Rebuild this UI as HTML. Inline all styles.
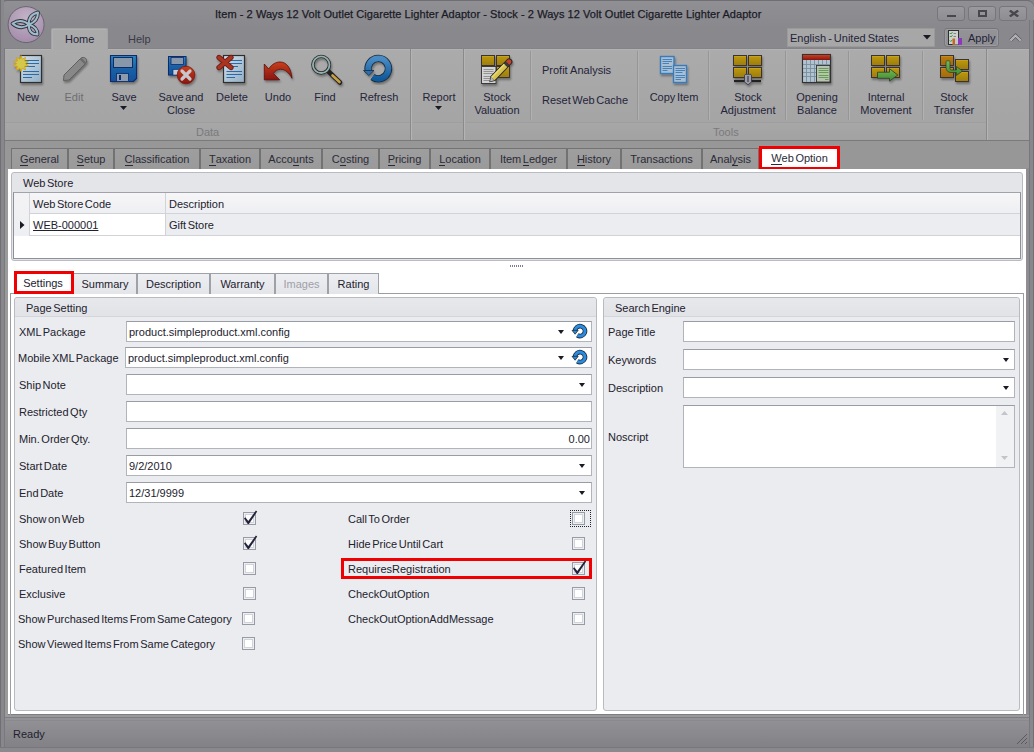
<!DOCTYPE html>
<html><head><meta charset="utf-8">
<style>
*{box-sizing:border-box;margin:0;padding:0}
html,body{width:1034px;height:752px;overflow:hidden;background:#858589}
body{position:relative;font-family:"Liberation Sans",sans-serif;font-size:11px;color:#23232e;word-spacing:-1.5px}
.a{position:absolute}
.t{position:absolute;white-space:nowrap;line-height:13px;font-size:11px;padding-top:1px}
.c{text-align:center}
#frame{left:0;top:0;width:1034px;height:752px;border-radius:7px 7px 0 0;background:#89898d;border:1px solid #6c6c70}
#title{left:0;top:0;width:1034px;height:28px;background:linear-gradient(#909094,#89898d)}
.wb{position:absolute;top:6px;width:28px;height:15px;border:1px solid #77777b;border-radius:3px;background:linear-gradient(#9a9a9e,#8e8e92)}
#rib{left:4px;top:48px;width:1026px;height:93px;background:linear-gradient(#ababab,#a6a6a6 60%,#a4a4a4);border-top:1px solid #848488;border-bottom:1px solid #7a7a7a;box-shadow:inset 0 1px 0 #b2b2b2}
.sep{position:absolute;top:51px;width:2px;height:69px;border-left:1px solid #969696;border-right:1px solid #b2b2b2}
.gsep{position:absolute;top:49px;width:2px;height:91px;border-left:1px solid #8a8a8a;border-right:1px solid #b4b4b4}
.cap{position:absolute;top:122px;height:18px;border-top:1px solid #9e9e9e;background:linear-gradient(#a7a7a7,#a2a2a2)}
.rl{color:#24243a}
.dis{color:#6e6e72}
.gl{color:#7a7a7e}
</style></head><body>
<div id="frame" class="a"></div>
<div id="title" class="a" style="border-radius:7px 7px 0 0;border-top:1px solid #6f6f73"></div>
<!-- logo -->
<svg class="a" style="left:6px;top:5px" width="40" height="40" viewBox="6 5 40 40">
<defs><radialGradient id="lg" cx="50%" cy="30%" r="70%"><stop offset="0" stop-color="#c2b2c6"/><stop offset="0.6" stop-color="#b09cb6"/><stop offset="1" stop-color="#a48cac"/></radialGradient></defs>
<circle cx="26.1" cy="24.6" r="18" fill="url(#lg)" stroke="#6a6470" stroke-width="1"/>
<g fill="none" stroke="#2e3238" stroke-width="3.8" stroke-linejoin="round">
<path d="M29 24.5Q21 18 12.5 23.5Q20.5 30.5 29 24.5Z"/><path d="M29 24.5Q38 21.5 38 12.5Q28 15 29 24.5Z"/><path d="M29 24.5Q37.8 27.5 37.5 34.5Q28 34 29 24.5Z"/></g>
<g fill="none" stroke="#9ebccc" stroke-width="2" stroke-linejoin="round">
<path d="M29 24.5Q21 18 12.5 23.5Q20.5 30.5 29 24.5Z"/><path d="M29 24.5Q38 21.5 38 12.5Q28 15 29 24.5Z"/><path d="M29 24.5Q37.8 27.5 37.5 34.5Q28 34 29 24.5Z"/></g>
</svg>
<div class="t" style="left:215px;top:7px;color:#1a1a26;letter-spacing:0.06px;word-spacing:0;-webkit-text-stroke:0.25px #1a1a26">Item - 2 Ways 12 Volt Outlet Cigarette Lighter Adaptor - Stock - 2 Ways 12 Volt Outlet Cigarette Lighter Adaptor</div>
<div class="wb" style="left:937px"><div class="a" style="left:9px;top:8px;width:9px;height:2px;background:#48484c"></div></div>
<div class="wb" style="left:968px"><div class="a" style="left:9px;top:3px;width:9px;height:7px;border:2px solid #48484c"></div></div>
<div class="wb" style="left:999px"><svg class="a" style="left:9px;top:3px" width="10" height="7"><path d="M0.8 0.5L9.2 6.5M9.2 0.5L0.8 6.5" stroke="#48484c" stroke-width="2.4"/></svg></div>

<!-- ribbon tabs -->


<div class="t" style="left:128px;top:32px;color:#3a3a48">Help</div>
<div class="a" style="left:787px;top:28px;width:148px;height:19px;background:#a7a7a7;border:1px solid #9a9a9a"></div>
<div class="t rl" style="left:790px;top:31px;word-spacing:-1px">English - United States</div>
<svg class="a" style="left:923px;top:35px" width="8" height="5"><path d="M0 0H8L4 4.5Z" fill="#1a1a26"/></svg>
<div class="a" style="left:944px;top:28px;width:55px;height:19px;background:linear-gradient(#949498,#8e8e92);border:1px solid #77777b;border-radius:3px;box-shadow:inset 0 0 0 1px #9c9ca0"></div>
<svg class="a" style="left:948px;top:30px" width="15" height="16" viewBox="948 30 15 16"><rect x="948.5" y="30.5" width="10" height="14" fill="#cfcfcf" stroke="#2e2e2e"/><path d="M949.8 33L950.8 34L952.5 32.2M949.8 36L950.8 37L952.5 35.2M949.8 40.5L950.8 41.5L952.5 39.7" stroke="#1e9a2a" stroke-width="1" fill="none"/><path d="M953.5 33.5H956M953.5 36.5H956" stroke="#7a7a7a" stroke-width="0.9"/><path d="M952.5 38.5H955V45H952.5Z" fill="#c8661e"/><path d="M955 38.5H958V44.5H955Z" fill="#c4c8cc"/><path d="M958 38H962V44.8H958Z" fill="#8a3ab8"/></svg>
<div class="t rl" style="left:968px;top:31px">Apply</div>
<svg class="a" style="left:1009px;top:33px" width="13" height="9"><path d="M1.5 7.5L6.5 2.5L11.5 7.5" stroke="#5e5e62" stroke-width="3.4" fill="none"/><path d="M1.5 7.5L6.5 2.5L11.5 7.5" stroke="#c4c4c6" stroke-width="1.8" fill="none"/><path d="M1.5 7.5L6.5 2.5L11.5 7.5" stroke="#9a9a9e" stroke-width="0.6" fill="none"/></svg>

<!-- ribbon body -->
<div id="rib" class="a"></div>
<div class="a" style="left:51px;top:28px;width:57px;height:22px;background:linear-gradient(#aaaaaa,#a9a9a9);border:1px solid #a4a4a6;border-bottom:none;border-radius:2px 2px 0 0;box-shadow:inset 1px 1px 0 #b0b0b0"></div>
<div class="t rl" style="left:65px;top:32px">Home</div>
<div class="cap" style="left:5px;width:406px"></div>
<div class="cap" style="left:413px;width:51px"></div>
<div class="cap" style="left:466px;width:521px"></div>
<div class="gsep" style="left:410px"></div>
<div class="gsep" style="left:463px"></div>
<div class="gsep" style="left:986px"></div>
<div class="sep" style="left:530px"></div>
<div class="sep" style="left:637px"></div>
<div class="sep" style="left:708px"></div>
<div class="sep" style="left:785px"></div>
<div class="sep" style="left:848px"></div>
<div class="sep" style="left:922px"></div>
<div class="t gl" style="left:196px;top:125px">Data</div>
<div class="t gl" style="left:713px;top:125px">Tools</div>

<!-- ribbon labels -->
<div class="t rl c" style="left:8px;width:40px;top:90px">New</div>
<div class="t dis c" style="left:54px;width:40px;top:90px">Edit</div>
<div class="t rl c" style="left:104px;width:40px;top:90px">Save</div>
<svg class="a" style="left:120px;top:106px" width="7" height="4"><path d="M0 0H7L3.5 4Z" fill="#1a1a26"/></svg>
<div class="t rl c" style="left:151px;width:60px;top:90px">Save and<br>Close</div>
<div class="t rl c" style="left:207px;width:50px;top:90px">Delete</div>
<div class="t rl c" style="left:253px;width:50px;top:90px">Undo</div>
<div class="t rl c" style="left:300px;width:50px;top:90px">Find</div>
<div class="t rl c" style="left:349px;width:60px;top:90px">Refresh</div>
<div class="t rl c" style="left:414px;width:50px;top:90px">Report</div>
<svg class="a" style="left:435px;top:106px" width="7" height="4"><path d="M0 0H7L3.5 4Z" fill="#1a1a26"/></svg>
<div class="t rl c" style="left:467px;width:60px;top:90px">Stock<br>Valuation</div>
<div class="t rl" style="left:542px;top:63px;word-spacing:0">Profit Analysis</div>
<div class="t rl" style="left:542px;top:93px">Reset Web Cache</div>
<div class="t rl c" style="left:644px;width:60px;top:90px">Copy Item</div>
<div class="t rl c" style="left:713px;width:70px;top:90px">Stock<br>Adjustment</div>
<div class="t rl c" style="left:787px;width:60px;top:90px">Opening<br>Balance</div>
<div class="t rl c" style="left:851px;width:70px;top:90px">Internal<br>Movement</div>
<div class="t rl c" style="left:924px;width:60px;top:90px">Stock<br>Transfer</div>

<svg class="a" style="left:0;top:0" width="1034" height="140" viewBox="0 0 1034 140">
<defs>
<linearGradient id="docg" x1="0" y1="0" x2="1" y2="1"><stop offset="0" stop-color="#d2dee8"/><stop offset="1" stop-color="#93b0c6"/></linearGradient>
<linearGradient id="gold" x1="0" y1="0" x2="0" y2="1"><stop offset="0" stop-color="#d4b030"/><stop offset="0.2" stop-color="#b8940e"/><stop offset="1" stop-color="#9c7c0c"/></linearGradient>
<linearGradient id="orng" x1="0" y1="0" x2="0" y2="1"><stop offset="0" stop-color="#d09a30"/><stop offset="0.2" stop-color="#b87a10"/><stop offset="1" stop-color="#a06a10"/></linearGradient>
<linearGradient id="redg" x1="0" y1="0" x2="0" y2="1"><stop offset="0" stop-color="#c8401c"/><stop offset="1" stop-color="#8a1410"/></linearGradient>
<linearGradient id="blug" x1="0" y1="0" x2="0" y2="1"><stop offset="0" stop-color="#4a8cc4"/><stop offset="1" stop-color="#0e5a9c"/></linearGradient>
<linearGradient id="diskg" x1="0" y1="0" x2="0" y2="1"><stop offset="0" stop-color="#2c86bc"/><stop offset="0.5" stop-color="#1a62a6"/><stop offset="1" stop-color="#12509a"/></linearGradient>
<linearGradient id="grng" x1="0" y1="0" x2="0" y2="1"><stop offset="0" stop-color="#78b858"/><stop offset="1" stop-color="#3c8a2c"/></linearGradient>
<filter id="sh" x="-20%" y="-20%" width="150%" height="150%"><feGaussianBlur in="SourceAlpha" stdDeviation="0.8"/><feOffset dx="1" dy="1.5"/><feComponentTransfer><feFuncA type="linear" slope="0.35"/></feComponentTransfer><feMerge><feMergeNode/><feMergeNode in="SourceGraphic"/></feMerge></filter>
</defs>
<!-- New -->
<g filter="url(#sh)">
<rect x="20.5" y="55.5" width="21" height="27" fill="url(#docg)" stroke="#2e2e2e" stroke-width="1.2"/>
<g stroke="#2b6aa6" stroke-width="1.1"><path d="M23 60.5H39M23 63.5H39M23 66.5H35M23 71.5H39M23 74.5H39M23 77.5H32"/></g>
<path d="M21 55.5L22.2 59.2L25.5 57.5L24.6 61L28.4 61.6L25.3 63.6L28.4 65.8L24.6 66.3L25.5 70L22.2 68.2L21 71.5L19.8 68.2L16.5 70L17.4 66.3L13.6 65.8L16.7 63.6L13.6 61.6L17.4 61L16.5 57.5L19.8 59.2Z" fill="#d4c84a" stroke="#d4a414" stroke-width="0.9"/>
</g>
<!-- Edit -->
<g filter="url(#sh)"><path d="M63.5 80.5L64 75L80.5 58.5C82 57 84.5 57 85.8 58.5C87 59.8 87 62 85.5 63.5L69 80Z" fill="#888888" stroke="#606060" stroke-width="1"/><path d="M80.5 58.5L85.5 63.5" stroke="#6a6a6a" stroke-width="2.2"/></g>
<!-- Save -->
<g filter="url(#sh)">
<path d="M110.5 55.5H136.5V78.5L133.5 81.5H110.5Z" fill="url(#diskg)" stroke="#0c2a6a" stroke-width="1.1"/>
<rect x="113.5" y="57.5" width="19" height="10" fill="#8898aa" stroke="#0c2a6a" stroke-width="1"/>
<rect x="116.5" y="73.5" width="12" height="8" fill="#8c9cae" stroke="#0c2a6a" stroke-width="0.8"/>
<rect x="119" y="75" width="2" height="5" fill="#0c2a6a"/>
</g>
<!-- Save and Close -->
<g filter="url(#sh)">
<rect x="168.5" y="56.5" width="17.5" height="18.5" fill="url(#diskg)" stroke="#0c2a6a" stroke-width="1"/>
<rect x="171" y="57.5" width="12.5" height="7" fill="#8898aa" stroke="#0c2a6a" stroke-width="0.8"/>
<rect x="173" y="69.5" width="8" height="5.5" fill="#c8ccd4" stroke="#0c2a6a" stroke-width="0.6"/>
<circle cx="186" cy="75" r="8.8" fill="url(#redg)" stroke="#7a1a10" stroke-width="0.8"/>
<path d="M182 71L190 79M190 71L182 79" stroke="#c8c8cc" stroke-width="3.2" stroke-linecap="round"/>
</g>
<!-- Delete -->
<g filter="url(#sh)">
<rect x="223.5" y="55.5" width="21" height="27" fill="url(#docg)" stroke="#2e2e2e" stroke-width="1.2"/>
<g stroke="#2b6aa6" stroke-width="1.1"><path d="M226.5 60.5H242M226.5 63.5H242M226.5 66.5H238M226.5 71.5H242M226.5 74.5H242M226.5 77.5H235"/></g>
<path d="M219 57.5L231 67.5M231 57.5L219 67.5" stroke="#6a1410" stroke-width="5.2" stroke-linecap="round"/>
<path d="M219 57.5L231 67.5M231 57.5L219 67.5" stroke="#a83420" stroke-width="3.6" stroke-linecap="round"/>
</g>
<!-- Undo -->
<g filter="url(#sh)"><path d="M264.3 64L268.6 69C272 64 276 62 280 62C286 62 291 67 292 78.3C289 72.5 285 69.2 280.5 69.2C277.5 69.2 275 71 273.4 73.5L279.7 79.8L264.3 79.8Z" fill="url(#redg)" stroke="#5a1010" stroke-width="0.8"/></g>
<!-- Find -->
<g filter="url(#sh)">
<path d="M328.5 71.5L340 82.5" stroke="#222" stroke-width="4.6" stroke-linecap="round"/>
<path d="M332.5 75.5L339.5 82" stroke="#c8a040" stroke-width="2.6" stroke-linecap="round"/>
<circle cx="321.2" cy="64.7" r="8.3" fill="none" stroke="#2a2a2a" stroke-width="3.4"/>
<circle cx="321.2" cy="64.7" r="8.3" fill="none" stroke="#92b2b2" stroke-width="1.8"/>
</g>
<!-- Refresh -->
<g filter="url(#sh)">
<path d="M368.5 71.5A10.2 10.2 0 1 1 372.5 77" fill="none" stroke="#1a2a3a" stroke-width="7.4"/>
<path d="M368.5 71.5A10.2 10.2 0 1 1 372.5 77" fill="none" stroke="url(#blug)" stroke-width="5.6"/>
<path d="M363.5 70.5H374L368.8 75.5Z" fill="#2a70b0" stroke="#1a2a3a" stroke-width="0.8"/>
</g>
<!-- Stock Valuation -->
<g filter="url(#sh)">
<rect x="481.5" y="55.5" width="13" height="10" fill="url(#gold)" stroke="#3a3030" stroke-width="1"/>
<rect x="496.5" y="55.5" width="13" height="10" fill="url(#gold)" stroke="#3a3030" stroke-width="1"/>
<rect x="496.5" y="66.5" width="13" height="11" fill="url(#gold)" stroke="#3a3030" stroke-width="1"/>
<rect x="481.5" y="66.5" width="14.5" height="17" fill="#d4d4d4" stroke="#3a3a3a" stroke-width="1"/>
<g stroke="#8a8a8a" stroke-width="0.9"><path d="M483.5 69.5H493.5M483.5 71.5H493.5M483.5 73.5H493.5M483.5 76.5H493.5M483.5 78.5H493.5M483.5 80.5H493.5"/></g>
<g transform="translate(489.3 82.2) rotate(-46)">
<path d="M0 0L5 -3.3H28.5A3.3 3.3 0 0 1 28.5 3.3H5Z" fill="#2a2a2a"/>
<rect x="5" y="-2.4" width="18.5" height="4.8" fill="#d6c44e"/>
<rect x="5" y="-2.4" width="18.5" height="1.6" fill="#e8da78"/>
<path d="M1 0L5 -2.4V2.4Z" fill="#b4b4b4"/>
<rect x="23.5" y="-2.6" width="3" height="5.2" fill="#3a3a3a"/>
<path d="M26.5 -2.4H28.3A2.4 2.4 0 0 1 28.3 2.4H26.5Z" fill="#c8402a"/>
</g>
</g>
<!-- Copy Item -->
<g filter="url(#sh)">
<rect x="660.5" y="56.5" width="13.5" height="17" fill="#a9c0d4" stroke="#3a7ab8" stroke-width="1.4"/>
<g stroke="#3a7ab8" stroke-width="0.9"><path d="M662.5 59.5H672M662.5 61.5H672M662.5 63.5H669M662.5 66.5H672M662.5 68.5H672M662.5 70.5H667.5"/></g>
<rect x="673.5" y="65.5" width="13" height="17" fill="#a9c0d4" stroke="#3a7ab8" stroke-width="1.4"/>
<g stroke="#3a7ab8" stroke-width="0.9"><path d="M675.5 68.5H685M675.5 70.5H685M675.5 72.5H682.5M675.5 75.5H685M675.5 77.5H685M675.5 79.5H681"/></g>
</g>
<!-- Stock Adjustment -->
<g filter="url(#sh)">
<rect x="733.5" y="55.5" width="13" height="10" fill="url(#gold)" stroke="#3a3030" stroke-width="1"/>
<rect x="748.5" y="55.5" width="13" height="10" fill="url(#gold)" stroke="#3a3030" stroke-width="1"/>
<rect x="733.5" y="67.5" width="13" height="10" fill="url(#gold)" stroke="#3a3030" stroke-width="1"/>
<rect x="748.5" y="67.5" width="13" height="10" fill="url(#gold)" stroke="#3a3030" stroke-width="1"/>
<rect x="734" y="80" width="27" height="2.2" fill="#222"/>
<path d="M744.5 75.5C744.5 74.5 745 74.3 748 74.3C751 74.3 751.5 74.5 751.5 75.5V82L748 84.8L744.5 82Z" fill="#9c9ca8" stroke="#3a3a44" stroke-width="0.9"/>
<rect x="747.3" y="76" width="1.4" height="6" fill="#4a4a54"/>
</g>
<!-- Opening Balance -->
<g filter="url(#sh)">
<rect x="802.5" y="54.5" width="28" height="28" fill="#b2c2ce" stroke="#333" stroke-width="1.1"/>
<g stroke="#7890a2" stroke-width="0.9"><path d="M806.5 60V82M810.5 60V82M814.5 60V82M818.5 60V65M822.5 60V65M826.5 60V65M803 64.5H830M803 68.5H816M803 72.5H816M803 76.5H816"/></g>
<rect x="803" y="55" width="27" height="5" fill="url(#redg)"/>
<rect x="816.5" y="65.5" width="13.5" height="16.5" fill="#b8c4b0" stroke="#333" stroke-width="0.9"/>
<g stroke="#5a9a48" stroke-width="0.9"><path d="M818.5 68.5H828.5M818.5 70.5H828.5M818.5 72.5H828.5M818.5 75.5H828.5M818.5 77.5H828.5M825 79.5H828.5"/></g>
</g>
<!-- Internal Movement -->
<g filter="url(#sh)">
<rect x="871.5" y="55.5" width="13" height="10" fill="url(#gold)" stroke="#3a3030" stroke-width="1"/>
<rect x="886.5" y="55.5" width="13" height="10" fill="url(#gold)" stroke="#3a3030" stroke-width="1"/>
<rect x="871.5" y="67.5" width="13" height="10" fill="url(#gold)" stroke="#3a3030" stroke-width="1"/>
<rect x="886.5" y="67.5" width="13" height="10" fill="url(#gold)" stroke="#3a3030" stroke-width="1"/>
<path d="M877.5 72.2H889.5V68.7L897.8 75L889.5 81.1V78.3H877.5Z" fill="url(#grng)" stroke="#2a3a2a" stroke-width="0.8"/>
</g>
<!-- Stock Transfer -->
<g filter="url(#sh)">
<rect x="940.5" y="55.5" width="13" height="10" fill="url(#orng)" stroke="#3a3030" stroke-width="1"/>
<rect x="940.5" y="67.5" width="13" height="10" fill="url(#orng)" stroke="#3a3030" stroke-width="1"/>
<rect x="955.5" y="59.5" width="13" height="10" fill="url(#gold)" stroke="#3a3030" stroke-width="1"/>
<rect x="955.5" y="71.5" width="13" height="10" fill="url(#gold)" stroke="#3a3030" stroke-width="1"/>
<path d="M946 61.5C946 60.5 950 60.5 950 61.5V68.5C950 69.5 950.5 70 951.5 70H956.5V66.5L962.5 71L956.5 75.5V72.5H951C948 72.5 946 70.5 946 67.5Z" fill="url(#grng)" stroke="#2a3a2a" stroke-width="0.7"/>
</g>
</svg>


<!-- tab strip -->
<div class="a" style="left:5px;top:141px;width:1024px;height:28px;background:#979797"></div>
<div class="a" style="left:0;top:0;width:4px;height:752px;background:linear-gradient(90deg,#707074 0,#707074 1px,#88888c 1px,#88888c 4px)"></div>
<div class="a" style="left:4px;top:48px;width:1px;height:700px;background:#7a7a7e"></div>
<div class="a" style="left:1029px;top:20px;width:5px;height:732px;background:linear-gradient(90deg,#78787c 0,#78787c 1px,#88888c 1px,#88888c 4px,#707074 4px)"></div>
<style>
.tb{position:absolute;top:148px;height:21px;background:linear-gradient(#9e9e9e,#9a9a9a);border:1px solid #727272;border-bottom:none}
.tt{position:absolute;top:152px;white-space:nowrap;line-height:13px;color:#2b2b38;padding-top:1px}
.tt u{text-decoration:none;border-bottom:1px solid #2b2b38;line-height:11px;display:inline-block}
</style>
<div class="tb" style="left:11px;width:57px"></div><div class="tt" style="left:11px;width:57px;text-align:center"><u>G</u>eneral</div>
<div class="tb" style="left:68px;width:46px"></div><div class="tt" style="left:68px;width:46px;text-align:center"><u>S</u>etup</div>
<div class="tb" style="left:114px;width:86px"></div><div class="tt" style="left:114px;width:86px;text-align:center"><u>C</u>lassification</div>
<div class="tb" style="left:200px;width:60px"></div><div class="tt" style="left:200px;width:60px;text-align:center"><u>T</u>axation</div>
<div class="tb" style="left:260px;width:62px"></div><div class="tt" style="left:260px;width:62px;text-align:center">Acco<u>u</u>nts</div>
<div class="tb" style="left:322px;width:57px"></div><div class="tt" style="left:322px;width:57px;text-align:center">C<u>o</u>sting</div>
<div class="tb" style="left:379px;width:51px"></div><div class="tt" style="left:379px;width:51px;text-align:center"><u>P</u>ricing</div>
<div class="tb" style="left:430px;width:60px"></div><div class="tt" style="left:430px;width:60px;text-align:center"><u>L</u>ocation</div>
<div class="tb" style="left:490px;width:77px"></div><div class="tt" style="left:490px;width:77px;text-align:center">Item <u>L</u>edger</div>
<div class="tb" style="left:567px;width:54px"></div><div class="tt" style="left:567px;width:54px;text-align:center"><u>H</u>istory</div>
<div class="tb" style="left:621px;width:81px"></div><div class="tt" style="left:621px;width:81px;text-align:center">Transactions</div>
<div class="tb" style="left:702px;width:57px"></div><div class="tt" style="left:702px;width:57px;text-align:center">Anal<u>y</u>sis</div>
<div class="a" style="left:759px;top:146px;width:81px;height:23px;background:#fff;border:3px solid #f00000;border-bottom-width:2px"></div><div class="tt" style="left:759px;width:81px;top:151px;text-align:center"><u>W</u>eb Option</div>


<style>
.gb{position:absolute;background:#ebecef;border:1px solid #b9bbc1;border-radius:3px}
.gh{position:absolute;left:0;top:0;right:0;height:19px;background:linear-gradient(#e7e8ec,#e2e3e7);border-bottom:1px solid #d5d6db;border-radius:3px 3px 0 0}
.in{position:absolute;height:21px;background:#fff;border:1px solid #b2b4bc;border-top-color:#9a9ca5}
.lb{position:absolute;white-space:nowrap;line-height:13px;color:#22222e;padding-top:1px}
.dd{position:absolute;width:0;height:0;border-left:3.5px solid transparent;border-right:3.5px solid transparent;border-top:4px solid #1a1a24}
.cb{position:absolute;width:13px;height:13px;border:1px solid #989ba4;background:#fff;box-shadow:inset 0 0 0 1px #eceef2,inset 0 0 0 2px #d0d4dc}
.ck{position:absolute}
.st{position:absolute;top:273px;height:21px;background:linear-gradient(#eeeff2,#e4e5e9);border:1px solid #9fa1a8;border-bottom:none}
.stt{position:absolute;top:277px;white-space:nowrap;line-height:13px;color:#22222e;text-align:center;padding-top:1px}
</style>
<!-- white page -->
<div class="a" style="left:8px;top:169px;width:1018px;height:546px;background:#fff"></div>
<div class="a" style="left:5px;top:714px;width:1024px;height:1px;background:#7e7e82"></div>
<div class="a" style="left:5px;top:715px;width:1024px;height:5px;background:linear-gradient(#9a9a9c 0,#9a9a9c 2px,#7e7e82 2px,#7e7e82 3px,#949498 3px)"></div>
<div class="a" style="left:5px;top:168px;width:3px;height:547px;background:#9a9a9a"></div>
<div class="a" style="left:1026px;top:168px;width:3px;height:547px;background:#8e8e92"></div>
<!-- Web Store group -->
<div class="gb" style="left:11px;top:172px;width:1012px;height:89px;background:#e4e5e9"></div>
<div class="lb" style="left:23px;top:176px">Web Store</div>
<div class="a" style="left:13px;top:192px;width:1008px;height:67px;background:#fff;border:1px solid #8d9098;border-top-color:#a0a3aa"></div>
<div class="a" style="left:14px;top:193px;width:1006px;height:21px;background:linear-gradient(#f6f6f8,#eeeff2);border-bottom:1px solid #d2d3d8"></div>
<div class="a" style="left:14px;top:214px;width:1006px;height:22px;background:#ecedf0;border-bottom:1px solid #d2d3d8"></div><div class="a" style="left:30px;top:214px;width:135px;height:21px;background:#fff"></div>
<div class="a" style="left:14px;top:193px;width:16px;height:43px;background:linear-gradient(#f3f3f5,#eeeff2);border-right:1px solid #d2d3d8"></div>
<div class="a" style="left:165px;top:193px;width:1px;height:43px;background:#d2d3d8"></div>
<div class="lb" style="left:33px;top:197px">Web Store Code</div>
<div class="lb" style="left:169px;top:197px">Description</div>
<svg class="a" style="left:20px;top:221px" width="5" height="8"><path d="M0 0L4.5 4L0 8Z" fill="#1a1a24"/></svg>
<div class="lb" style="left:33px;top:218px;text-decoration:underline">WEB-000001</div>
<div class="lb" style="left:169px;top:218px">Gift Store</div>
<div class="a" style="left:510px;top:265px;width:13px;height:2px;background:repeating-linear-gradient(90deg,#7d808a 0,#7d808a 1px,transparent 1px,transparent 2px)"></div>
<!-- settings tabs -->
<div class="a" style="left:10px;top:293px;width:1014px;height:422px;border:1px solid #9b9da5;border-bottom:none"></div>
<div class="st" style="left:73px;width:64px"></div><div class="stt" style="left:73px;width:64px">Summary</div>
<div class="st" style="left:137px;width:73px"></div><div class="stt" style="left:137px;width:73px">Description</div>
<div class="st" style="left:210px;width:65px"></div><div class="stt" style="left:210px;width:65px">Warranty</div>
<div class="st" style="left:275px;width:53px"></div><div class="stt" style="left:275px;width:53px;color:#a0a0a8">Images</div>
<div class="st" style="left:328px;width:51px"></div><div class="stt" style="left:328px;width:51px">Rating</div>
<div class="a" style="left:14px;top:271px;width:60px;height:23px;background:#fff;border:3px solid #f00000"></div><div class="stt" style="left:13px;width:60px;top:276px">Settings</div>

<!-- Page Setting group -->
<div class="gb" style="left:14px;top:297px;width:583px;height:414px"><div class="gh"></div></div>
<div class="lb" style="left:26px;top:301px">Page Setting</div>
<div class="lb" style="left:19px;top:325px">XML Package</div>
<div class="lb" style="left:18px;top:351px">Mobile XML Package</div>
<div class="lb" style="left:19px;top:378px">Ship Note</div>
<div class="lb" style="left:19px;top:405px">Restricted Qty</div>
<div class="lb" style="left:19px;top:432px">Min. Order Qty.</div>
<div class="lb" style="left:19px;top:459px">Start Date</div>
<div class="lb" style="left:19px;top:486px">End Date</div>
<div class="in" style="left:126px;top:321px;width:466px"></div>
<div class="lb" style="left:129px;top:325px">product.simpleproduct.xml.config</div>
<div class="in" style="left:125px;top:347px;width:467px"></div>
<div class="lb" style="left:128px;top:351px">product.simpleproduct.xml.config</div>
<div class="in" style="left:126px;top:374px;width:466px"></div>
<div class="in" style="left:126px;top:401px;width:466px"></div>
<div class="in" style="left:126px;top:428px;width:466px"></div>
<div class="lb" style="left:490px;width:100px;text-align:right;top:432px">0.00</div>
<div class="in" style="left:126px;top:455px;width:466px"></div>
<div class="lb" style="left:129px;top:459px">9/2/2010</div>
<div class="in" style="left:126px;top:482px;width:466px"></div>
<div class="lb" style="left:129px;top:486px">12/31/9999</div>
<div class="dd" style="left:558px;top:330px"></div>
<div class="dd" style="left:558px;top:356px"></div>
<div class="dd" style="left:579px;top:383px"></div>
<div class="dd" style="left:579px;top:464px"></div>
<div class="dd" style="left:579px;top:491px"></div>
<svg class="a" style="left:570px;top:322px" width="18" height="18" viewBox="570 322 18 18"><path d="M575 331A5 5 0 1 1 577.3 335.3" fill="none" stroke="#1c2a3a" stroke-width="4.6"/><path d="M575 331A5 5 0 1 1 577.3 335.3" fill="none" stroke="#2a8ce0" stroke-width="3"/><path d="M572 330.3H578.2L575.1 334.2Z" fill="#2a8ce0" stroke="#1c2a3a" stroke-width="0.8"/></svg>
<svg class="a" style="left:570px;top:348px" width="18" height="18" viewBox="570 322 18 18"><path d="M575 331A5 5 0 1 1 577.3 335.3" fill="none" stroke="#1c2a3a" stroke-width="4.6"/><path d="M575 331A5 5 0 1 1 577.3 335.3" fill="none" stroke="#2a8ce0" stroke-width="3"/><path d="M572 330.3H578.2L575.1 334.2Z" fill="#2a8ce0" stroke="#1c2a3a" stroke-width="0.8"/></svg>

<div class="lb" style="left:19px;top:512px">Show on Web</div>
<div class="lb" style="left:19px;top:537px">Show Buy Button</div>
<div class="lb" style="left:19px;top:562px">Featured Item</div>
<div class="lb" style="left:19px;top:587px">Exclusive</div>
<div class="lb" style="left:18px;top:612px">Show Purchased Items From Same Category</div>
<div class="lb" style="left:18px;top:637px">Show Viewed Items From Same Category</div>
<div class="cb" style="left:243px;top:512px"></div>
<div class="cb" style="left:243px;top:537px"></div>
<div class="cb" style="left:243px;top:562px"></div>
<div class="cb" style="left:243px;top:587px"></div>
<div class="cb" style="left:242px;top:612px"></div>
<div class="cb" style="left:242px;top:637px"></div>
<svg class="ck" style="left:243px;top:510px" width="15" height="15"><path d="M1 8.4L2.3 7.3L5.3 11L12.9 0.6L14.2 1.6L5.9 13.9L4.7 13.9Z" fill="#22223a"/></svg>
<svg class="ck" style="left:243px;top:535px" width="15" height="15"><path d="M1 8.4L2.3 7.3L5.3 11L12.9 0.6L14.2 1.6L5.9 13.9L4.7 13.9Z" fill="#22223a"/></svg>

<div class="a" style="left:341px;top:558px;width:251px;height:21px;border:3px solid #f00000"></div>
<div class="lb" style="left:348px;top:512px">Call To Order</div>
<div class="lb" style="left:348px;top:537px">Hide Price Until Cart</div>
<div class="lb" style="left:348px;top:562px">RequiresRegistration</div>
<div class="lb" style="left:348px;top:587px">CheckOutOption</div>
<div class="lb" style="left:348px;top:612px">CheckOutOptionAddMessage</div>
<div class="a" style="left:570px;top:510px;width:21px;height:17px;border:1px dotted #22222e"></div>
<div class="cb" style="left:572px;top:512px"></div>
<div class="cb" style="left:572px;top:537px"></div>
<div class="cb" style="left:572px;top:562px"></div>
<div class="cb" style="left:572px;top:587px"></div>
<div class="cb" style="left:572px;top:612px"></div>
<svg class="ck" style="left:572px;top:560px" width="15" height="15"><path d="M1 8.4L2.3 7.3L5.3 11L12.9 0.6L14.2 1.6L5.9 13.9L4.7 13.9Z" fill="#22223a"/></svg>

<!-- Search Engine group -->
<div class="gb" style="left:603px;top:297px;width:417px;height:414px"><div class="gh"></div></div>
<div class="lb" style="left:615px;top:301px">Search Engine</div>
<div class="lb" style="left:608px;top:325px">Page Title</div>
<div class="lb" style="left:608px;top:353px">Keywords</div>
<div class="lb" style="left:608px;top:381px">Description</div>
<div class="lb" style="left:608px;top:430px">Noscript</div>
<div class="in" style="left:683px;top:321px;width:332px"></div>
<div class="in" style="left:683px;top:349px;width:332px"></div>
<div class="in" style="left:683px;top:377px;width:332px"></div>
<div class="in" style="left:683px;top:405px;width:332px;height:63px"></div>
<div class="a" style="left:996px;top:406px;width:18px;height:61px;background:#f1f2f4"></div>
<svg class="a" style="left:1001px;top:411px" width="7" height="5"><path d="M0 4H7L3.5 0Z" fill="#c3c5cb"/></svg>
<svg class="a" style="left:1001px;top:456px" width="7" height="5"><path d="M0 0H7L3.5 4Z" fill="#c3c5cb"/></svg>
<div class="dd" style="left:1003px;top:358px"></div>
<div class="dd" style="left:1003px;top:386px"></div>

<!-- status bar -->
<div class="a" style="left:5px;top:720px;width:1024px;height:1px;background:#8a8a8e"></div>
<div class="a" style="left:5px;top:721px;width:1024px;height:26px;background:linear-gradient(#919195,#828286)"></div>
<div class="a" style="left:0;top:747px;width:1034px;height:5px;background:linear-gradient(#78787c 0,#78787c 1px,#8a8a8e 1px)"></div>
<div class="lb" style="left:13px;top:727px">Ready</div>
<svg class="a" style="left:1016px;top:733px" width="12" height="12"><path d="M1 11L11 1M5 11L11 5M9 11L11 9" stroke="#5a5a5e" stroke-width="1"/></svg>


</body></html>
